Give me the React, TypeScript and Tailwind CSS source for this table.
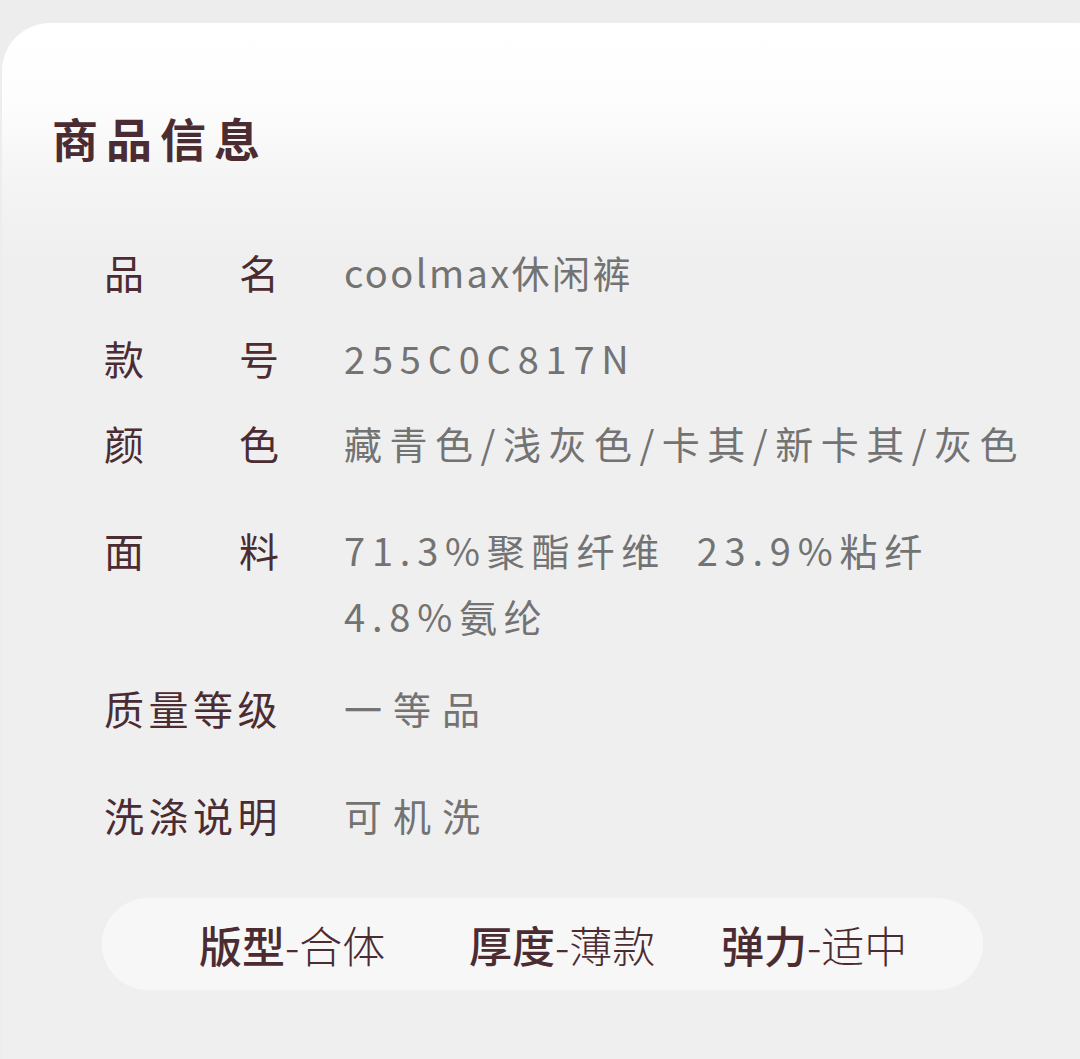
import React from "react";

function Row({
  label,
  children,
  mt,
  tracking,
  spread,
}: {
  label: string;
  children: React.ReactNode;
  mt: string;
  tracking: string;
  spread?: boolean;
}) {
  return (
    <div className={`flex items-start ${mt}`}>
      <div
        className={`w-[240px] shrink-0 text-[40px] leading-[48px] font-normal text-[#4a2c32] ${
          spread ? "flex justify-between pr-[65px]" : "tracking-[4.5px]"
        }`}
      >
        {spread ? (
          <>
            <span>{label[0]}</span>
            <span>{label[1]}</span>
          </>
        ) : (
          label
        )}
      </div>
      <div className={`text-[38px] leading-[48px] text-[#737373] ${tracking}`}>{children}</div>
    </div>
  );
}

export default function App() {
  return (
    <div
      className="w-[1080px] h-[1059px] overflow-hidden bg-[#ededed] pt-[23px] pl-[2px]"
      style={{ fontFamily: '"Noto Sans CJK SC", "Noto Sans", sans-serif' }}
    >
      <div className="w-[1120px] h-[1100px] rounded-t-[48px] bg-[linear-gradient(to_bottom,#ffffff_0px,#fdfdfd_80px,#f3f3f3_170px,#efefef_240px,#efefef_100%)]">
        <div className="pl-[50px] pt-[88px] text-[46px] leading-[52px] font-bold tracking-[8px] text-[#4a2c32]">
          商品信息
        </div>
        <div className="pl-[102px] pt-[85px]">
          <Row label="品名" mt="mt-0" tracking="tracking-[2.4px]" spread>
            coolmax休闲裤
          </Row>
          <Row label="款号" mt="mt-[38px]" tracking="tracking-[6.8px]" spread>
            255C0C817N
          </Row>
          <Row label="颜色" mt="mt-[37px]" tracking="tracking-[7.5px]" spread>
            藏青色/浅灰色/卡其/新卡其/灰色
          </Row>
          <div className="flex items-start mt-[50px]">
            <div className="w-[240px] shrink-0 flex justify-between pr-[65px] text-[40px] leading-[66px] font-normal text-[#4a2c32]">
              <span>面</span>
              <span>料</span>
            </div>
            <div className="text-[38px] leading-[66px] text-[#737373] tracking-[6.8px]">
              <div className="whitespace-pre">71.3%聚酯纤维  23.9%粘纤</div>
              <div>4.8%氨纶</div>
            </div>
          </div>
          <Row label="质量等级" mt="mt-[35px]" tracking="tracking-[11px]">
            一等品
          </Row>
          <Row label="洗涤说明" mt="mt-[59px]" tracking="tracking-[11px]">
            可机洗
          </Row>
          <div className="-ml-[2px] mt-[59px] w-[881px] h-[92px] rounded-full bg-[#f7f7f7] flex items-center pl-[97px] text-[43px] leading-[48px] text-[#4a2c32]">
            <div className="w-[270px] shrink-0">
              <span className="font-medium">版型</span>
              <span className="font-light">-合体</span>
            </div>
            <div className="w-[252px] shrink-0">
              <span className="font-medium">厚度</span>
              <span className="font-light">-薄款</span>
            </div>
            <div>
              <span className="font-medium">弹力</span>
              <span className="font-light">-适中</span>
            </div>
          </div>
        </div>
      </div>
    </div>
  );
}
